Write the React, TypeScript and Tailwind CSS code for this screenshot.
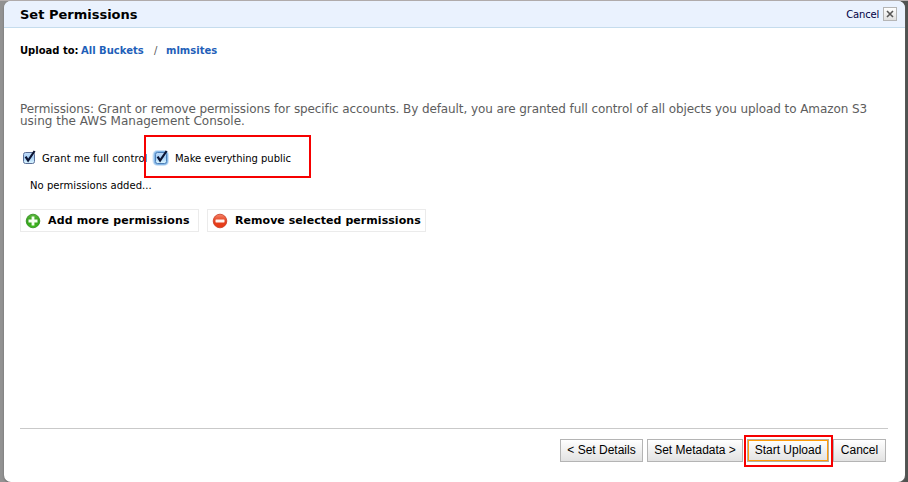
import React from 'react';

function CheckBox({ focused = false }: { focused?: boolean }) {
  const id = focused ? 'box-focused' : 'box-plain';
  return (
    <svg width="20" height="20" viewBox="0 0 20 20" className="block shrink-0">
      <defs>
        <linearGradient id={id} x1="0" y1="0" x2="0" y2="1">
          <stop offset="0" stopColor="#c3dcf7" />
          <stop offset="0.45" stopColor="#a5cef5" />
          <stop offset="1" stopColor="#dcf6ff" />
        </linearGradient>
      </defs>
      {focused && (
        <>
          <rect x="1.5" y="2" width="16.5" height="16" rx="5" fill="#cfe3f6" />
          <rect x="2.7" y="3" width="14.3" height="14" rx="4" fill="#86b8e8" />
        </>
      )}
      <rect x="4.5" y="4.5" width="11" height="11" rx="2" fill={`url(#${id})`} stroke={focused ? '#4d7fb8' : '#5b6f98'} />
      <path d="M6.6 8.6 L9.1 12.6 L15.6 3" fill="none" stroke="#0b1433" strokeWidth="2.2" />
    </svg>
  );
}

function RoundIcon({ kind }: { kind: 'add' | 'remove' }) {
  const add = kind === 'add';
  return (
    <svg width="16" height="16" viewBox="0 0 16 16" className="block shrink-0">
      <defs>
        <linearGradient id={`icon-${kind}`} x1="0" y1="0" x2="0" y2="1">
          <stop offset="0" stopColor={add ? '#5cb83c' : '#f58468'} />
          <stop offset="0.5" stopColor={add ? '#35a01c' : '#e4401f'} />
          <stop offset="1" stopColor={add ? '#3fbd1e' : '#e83a14'} />
        </linearGradient>
      </defs>
      <circle cx="8" cy="8" r="6.8" fill={`url(#icon-${kind})`} stroke={add ? '#2c8a1c' : '#c93a22'} strokeWidth="0.8" />
      {add ? (
        <path d="M8 3.5V12.5M3.5 8H12.5" stroke="#f4fff0" strokeWidth="2.8" />
      ) : (
        <rect x="3.5" y="6.5" width="9" height="3" rx="0.4" fill="#fff4ef" />
      )}
    </svg>
  );
}

function Header() {
  return (
    <header className="flex h-[27px] shrink-0 items-center justify-between rounded-t-[7px] border-b border-[#c5dced] bg-[#eaf2fe] pr-[8px] pl-[16px]">
      <h1 className="pt-px text-[13px] font-bold">Set Permissions</h1>
      <div className="flex items-center gap-[4px]">
        <span className="text-[10px] tracking-[-0.2px] text-[#000044]">Cancel</span>
        <button className="flex size-[14px] items-center justify-center border border-[#b5b5b5] bg-linear-to-b from-white to-[#e0e0e0]">
          <svg width="8" height="8" viewBox="0 0 8 8">
            <path d="M1 1L7 7M7 1L1 7" stroke="#555" strokeWidth="1.6" />
          </svg>
        </button>
      </div>
    </header>
  );
}

function FooterButton({ children, size, active = false }: { children: React.ReactNode; size: string; active?: boolean }) {
  return (
    <button
      className={`${size} flex h-[23px] shrink-0 items-center justify-center border bg-linear-to-b from-white to-[#e2e2e2] pb-[2px] font-['Liberation_Sans',sans-serif] text-[12px] whitespace-nowrap ${
        active ? 'border-[#b9aea0] shadow-[inset_0_0_0_1px_#ff9c0a]' : 'border-[#b4b4b4]'
      }`}
    >
      {children}
    </button>
  );
}

export default function App() {
  return (
    <div className="h-[482px] w-[908px] overflow-hidden bg-linear-to-r from-[#929292] from-[4px] to-[#505351] to-[904px] font-['DejaVu_Sans',Verdana,sans-serif] text-black">
      <div className="h-full border-t border-[#b5afaf] pr-[3px] pl-[4px]">
        <div className="flex h-[481px] flex-col rounded-[7px] bg-white shadow-[0_1px_2px_#666]">
          <Header />
          <main className="flex grow flex-col pr-[17px] pl-[16px]">
            <nav className="mt-[15px] flex h-[14px] items-center text-[10px] font-bold whitespace-nowrap">
              <span className="w-[61px]">Upload to:</span>
              <a className="w-[73px] text-[#1f5fb9]">All Buckets</a>
              <span className="w-[12px] font-normal text-[#555]">/</span>
              <a className="text-[#1f5fb9]">mlmsites</a>
            </nav>
            <p className="mt-[46px] h-[24px] text-[12px] leading-[12px] whitespace-nowrap text-[#5d5d5d]">
              <span className="block h-[12px] tracking-[-0.09px]">
                Permissions: Grant or remove permissions for specific accounts. By default, you are granted full control of all objects you upload to Amazon S3
              </span>
              <span className="block h-[12px]">using the AWS Management Console.</span>
            </p>
            <div className="relative mt-[21px] flex h-[20px] items-center text-[10px] whitespace-nowrap">
              <div className="-ml-px flex w-[132px] items-center">
                <CheckBox />
                <span className="ml-[3px] tracking-[0.08px]">Grant me full control</span>
              </div>
              <div className="flex items-center">
                <CheckBox focused />
                <span className="ml-[4px] tracking-[-0.04px]">Make everything public</span>
              </div>
              <div className="absolute top-[-13px] left-[124px] h-[43px] w-[167px] border-2 border-[#f60000]" />
            </div>
            <p className="mt-[11px] ml-[10px] h-[14px] text-[10px] leading-[14px] tracking-[0.05px]">No permissions added...</p>
            <div className="mt-[16px] flex gap-[8px] text-[11px] font-bold whitespace-nowrap">
              <button className="flex h-[23px] w-[179px] items-center border border-[#ebebeb] pl-[4px]">
                <RoundIcon kind="add" />
                <span className="ml-[7px] pt-[2px] tracking-[0.15px]">Add more permissions</span>
              </button>
              <button className="flex h-[23px] w-[219px] items-center border border-[#ebebeb] pl-[4px]">
                <RoundIcon kind="remove" />
                <span className="ml-[7px] pt-[2px] tracking-[0.05px]">Remove selected permissions</span>
              </button>
            </div>
            <footer className="mt-auto flex h-[54px] border-t border-[#c9c9c9] pt-[10px] pr-[2px]">
              <div className="ml-auto flex gap-[4px]">
                <FooterButton size="w-[83px]">&lt; Set Details</FooterButton>
                <FooterButton size="w-[96px]">Set Metadata &gt;</FooterButton>
                <div className="relative">
                  <FooterButton size="w-[82px]" active>Start Upload</FooterButton>
                  <div className="absolute top-[-4px] left-[-3px] h-[32px] w-[89px] border-2 border-[#f60000]" />
                </div>
                <FooterButton size="w-[53px]">Cancel</FooterButton>
              </div>
            </footer>
          </main>
        </div>
      </div>
    </div>
  );
}
